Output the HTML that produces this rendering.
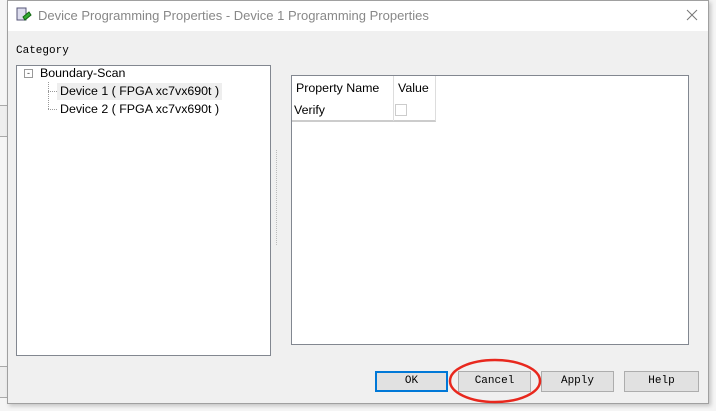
<!DOCTYPE html><html><head><style>
body{margin:0;width:716px;height:411px;background:#f5f5f5;position:relative;overflow:hidden;font-family:"Liberation Sans","Noto Sans CJK SC",sans-serif;}
.a{position:absolute}
.t{font-size:12.4px}
.mono{font-family:"Liberation Mono",monospace;font-size:11px;color:#000}
.btn{position:absolute;top:371px;height:21px;width:73px;background:#e1e1e1;border:1px solid #adadad;box-sizing:border-box;text-align:center;line-height:19px;font-family:"Liberation Mono",monospace;font-size:11px}
</style></head><body>
<div class="a" style="left:0;top:105px;width:8px;height:30px;border-top:1px solid #aaa;border-bottom:1px solid #aaa;background:#eee"></div>
<div class="a" style="left:0;top:366px;width:8px;height:30px;border-top:1px solid #aaa;border-bottom:1px solid #aaa;background:#eee"></div>
<div class="a" style="left:7px;top:0;width:702px;height:404px;background:#f0f0f0;border:1px solid #a0a0a0;box-sizing:border-box;box-shadow:2px 2px 4px rgba(0,0,0,.2)"></div>
<div class="a" style="left:8px;top:1px;width:700px;height:30px;background:#fff"></div>
<svg class="a" style="left:16px;top:7px" width="16" height="16"><rect x="1" y="1" width="9" height="12" fill="#dde" stroke="#557"/><path d="M7 10l6-5 2 3-6 5z" fill="#3a3" stroke="#161"/></svg>
<div class="a" style="left:38px;top:8px;font-size:13px;color:#888">Device Programming Properties - Device 1 Programming Properties</div>
<svg class="a" style="left:686px;top:9px" width="12" height="12"><path d="M1 1L11 11M11 1L1 11" stroke="#777" stroke-width="1"/></svg>
<div class="a mono" style="left:16px;top:45px">Category</div>
<div class="a" style="left:16px;top:65px;width:255px;height:291px;background:#fff;border:1px solid #828790;box-sizing:border-box"></div>
<div class="a" style="left:24px;top:69px;width:7px;height:7px;border:1px solid #999;font-size:9px;line-height:6px;text-align:center;color:#333">-</div>
<div class="a t" style="left:40px;top:66px">Boundary-Scan</div>
<div class="a" style="left:48px;top:91px;width:9px;border-top:1px dotted #999"></div>
<div class="a" style="left:48px;top:109px;width:9px;border-top:1px dotted #999"></div>
<div class="a" style="left:48px;top:82px;height:27px;border-left:1px dotted #999"></div>
<div class="a" style="left:57px;top:83px;width:165px;height:17px;background:#eee"></div>
<div class="a t" style="left:60px;top:84px">Device 1 ( FPGA xc7vx690t )</div>
<div class="a t" style="left:60px;top:102px">Device 2 ( FPGA xc7vx690t )</div>
<div class="a" style="left:276px;top:150px;height:95px;border-left:1px dotted #bbb"></div>
<div class="a" style="left:291px;top:75px;width:398px;height:270px;background:#fff;border:1px solid #828790;box-sizing:border-box"></div>
<div class="a" style="left:292px;top:76px;width:144px;height:46px;border-right:1px solid #ddd;border-bottom:2px solid #ccc;box-sizing:border-box"></div>
<div class="a" style="left:393px;top:76px;height:45px;border-left:1px solid #ddd"></div>
<div class="a t" style="left:296px;top:81px">Property Name</div>
<div class="a t" style="left:398px;top:81px">Value</div>
<div class="a t" style="left:294px;top:103px">Verify</div>
<div class="a" style="left:395px;top:104px;width:12px;height:12px;border:1px solid #ccc;box-sizing:border-box"></div>
<div class="btn" style="left:375px;border:2px solid #0078d7;line-height:17px">OK</div>
<div class="btn" style="left:458px">Cancel</div>
<div class="btn" style="left:541px">Apply</div>
<div class="btn" style="left:624px;width:75px">Help</div>
<svg class="a" style="left:440px;top:355px" width="110" height="52"><ellipse cx="55" cy="26" rx="45" ry="21" fill="none" stroke="#e8281e" stroke-width="2.5"/></svg>
</body></html>
